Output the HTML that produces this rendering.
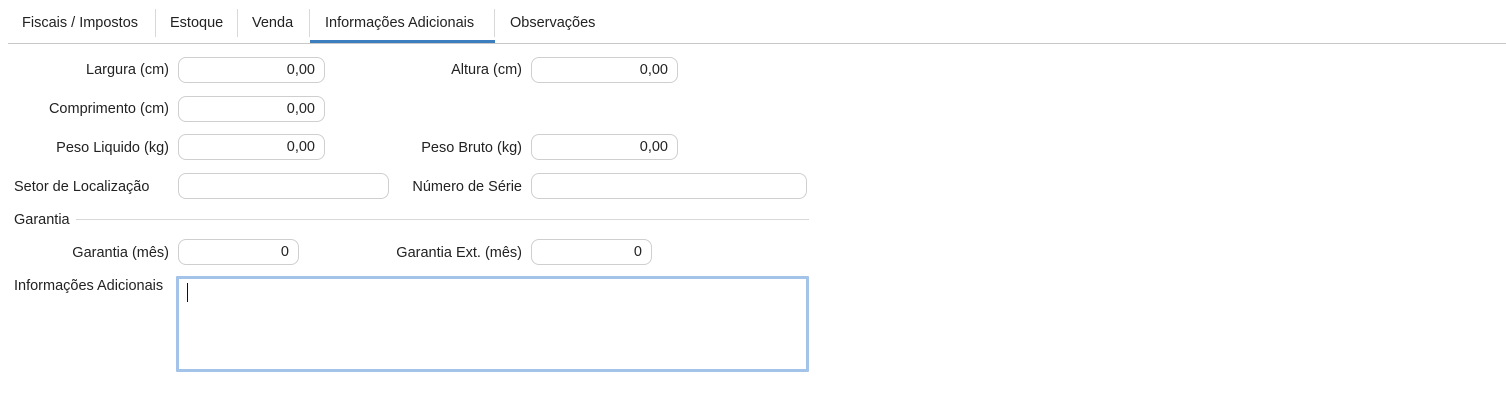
<!DOCTYPE html>
<html><head><meta charset="utf-8"><style>
body{margin:0;width:1506px;height:404px;background:#fff;font-family:"Liberation Sans",sans-serif;font-size:14.5px;color:#222;position:relative;overflow:hidden}
.a{position:absolute;white-space:nowrap}
.tab{position:absolute;top:14px;line-height:18px}
.sep{position:absolute;top:9px;width:1px;height:28px;background:#d8d8d8}
.lbl{position:absolute;text-align:right;line-height:18px;white-space:nowrap}
.in{position:absolute;height:24px;border:1px solid #cfcfcf;border-radius:8px;box-sizing:content-box;text-align:right;line-height:24px;padding-right:9px;background:#fff}
</style></head><body>
<div class="tab" style="left:22px">Fiscais / Impostos</div>
<div class="sep" style="left:155px"></div>
<div class="tab" style="left:170px">Estoque</div>
<div class="sep" style="left:237px"></div>
<div class="tab" style="left:252px">Venda</div>
<div class="sep" style="left:309px"></div>
<div class="tab" style="left:325px">Informações Adicionais</div>
<div class="sep" style="left:494px"></div>
<div class="tab" style="left:510px">Observações</div>
<div class="a" style="left:8px;top:43px;width:1498px;height:1px;background:#c8c8c8"></div>
<div class="a" style="left:310px;top:40px;width:185px;height:3px;background:#3d7ebf"></div>

<div class="lbl" style="right:1337px;top:61px">Largura (cm)</div>
<div class="in" style="left:178px;top:57px;width:136px">0,00</div>
<div class="lbl" style="right:984px;top:61px">Altura (cm)</div>
<div class="in" style="left:531px;top:57px;width:136px">0,00</div>

<div class="lbl" style="right:1337px;top:100px">Comprimento (cm)</div>
<div class="in" style="left:178px;top:96px;width:136px">0,00</div>

<div class="lbl" style="right:1337px;top:139px">Peso Liquido (kg)</div>
<div class="in" style="left:178px;top:134px;width:136px">0,00</div>
<div class="lbl" style="right:984px;top:139px">Peso Bruto (kg)</div>
<div class="in" style="left:531px;top:134px;width:136px">0,00</div>

<div class="lbl" style="left:14px;top:178px">Setor de Localização</div>
<div class="in" style="left:178px;top:173px;width:200px"></div>
<div class="lbl" style="right:984px;top:178px">Número de Série</div>
<div class="in" style="left:531px;top:173px;width:265px"></div>

<div class="lbl" style="left:14px;top:211px">Garantia</div>
<div class="a" style="left:76px;top:219px;width:733px;height:1px;background:#d8d8d8"></div>

<div class="lbl" style="right:1337px;top:244px">Garantia (mês)</div>
<div class="in" style="left:178px;top:239px;width:110px">0</div>
<div class="lbl" style="right:984px;top:244px">Garantia Ext. (mês)</div>
<div class="in" style="left:531px;top:239px;width:110px">0</div>

<div class="lbl" style="left:14px;top:277px">Informações Adicionais</div>
<div class="a" style="left:176px;top:276px;width:627px;height:90px;border:3px solid #a3c4e8;border-radius:1px"></div>
<div class="a" style="left:187px;top:283px;width:1px;height:19px;background:#111"></div>
</body></html>
